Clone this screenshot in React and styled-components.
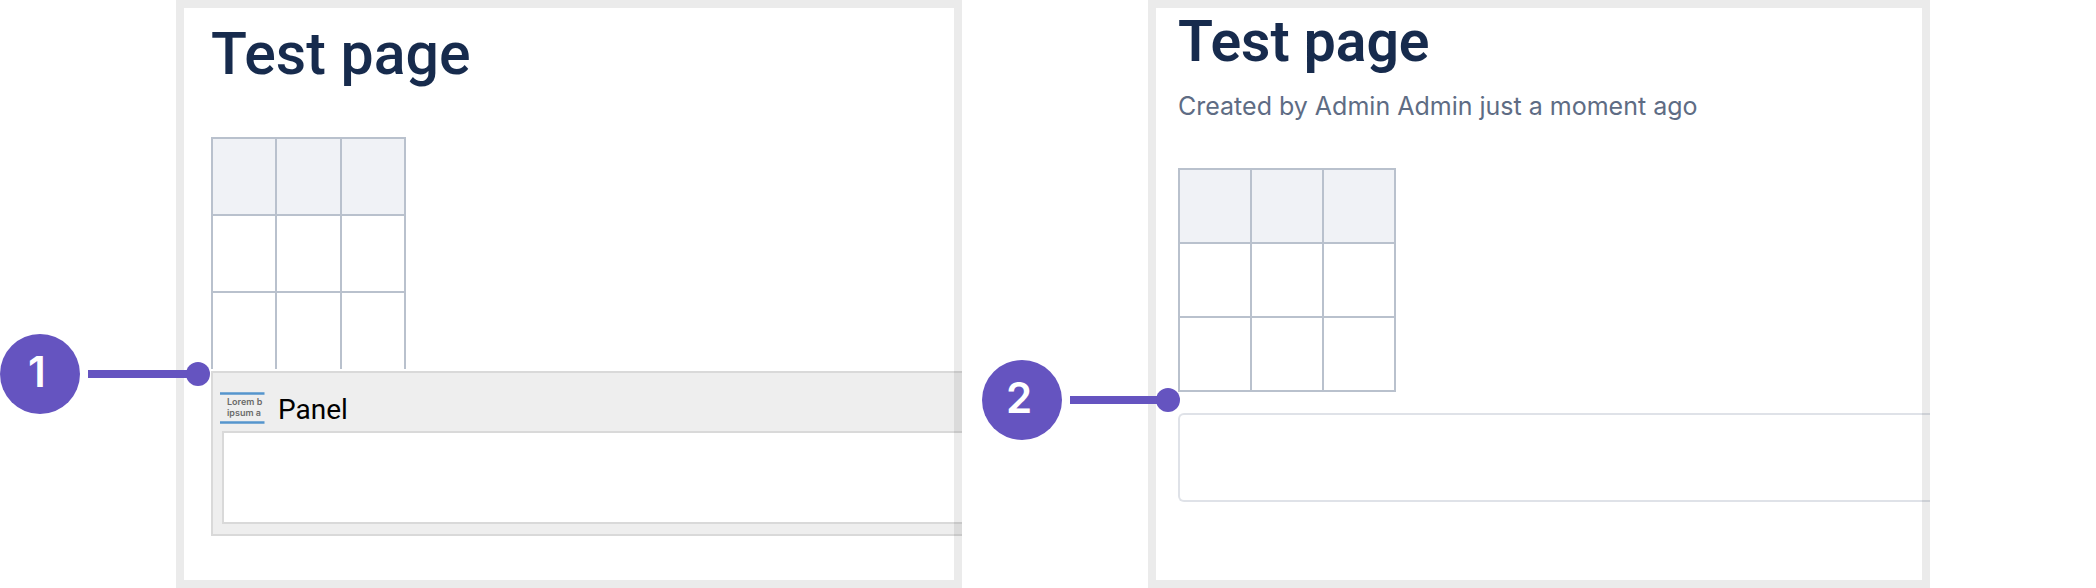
import React from 'react';
import styled, { createGlobalStyle } from 'styled-components';

const rows = [0, 1];
const columns = [0, 1, 2];

const Grid = ({ width, rowHeight, open }) => (
  <Table $width={width} $rowHeight={rowHeight} $open={open}>
    <thead>
      <tr>
        {columns.map(column => (
          <th key={column} scope="col" />
        ))}
      </tr>
    </thead>
    <tbody>
      {rows.map(row => (
        <tr key={row}>
          {columns.map(column => (
            <td key={column} />
          ))}
        </tr>
      ))}
    </tbody>
  </Table>
);

const Callout = ({ number, top, width, reach }) => (
  <CalloutWrapper $top={top} $width={width} $reach={reach}>
    <Badge>{number}</Badge>
    <Pointer />
  </CalloutWrapper>
);

const PanelIcon = () => (
  <svg width="46" height="32" viewBox="0 0 46 32" aria-hidden="true">
    <path d="M0 1.5h44.5M0 30.5h44.5" stroke="#5595cd" strokeWidth="2.4" />
    <g fill="#6a6a6a" fontFamily="Inter, sans-serif" fontSize="9" fontWeight="600">
      <text x="7" y="13">Lorem b</text>
      <text x="7" y="24">ipsum a</text>
    </g>
  </svg>
);

const App = () => (
  <>
    <GlobalStyle />
    <Page>
      <Figure>
        <Frame>
          <EditorContent>
            <Title>Test page</Title>
            <Grid width={195} rowHeight={77} open />
            <Macro>
              <MacroHeader>
                <PanelIcon />
                <MacroName>Panel</MacroName>
              </MacroHeader>
              <MacroBody />
            </Macro>
          </EditorContent>
        </Frame>
        <Callout number={1} top={334} width={210} reach={34} />
      </Figure>
      <Figure>
        <Frame>
          <ViewContent>
            <ViewTitle>Test page</ViewTitle>
            <Byline>Created by Admin Admin just a moment ago</Byline>
            <Grid width={218} rowHeight={74} />
            <Panel />
          </ViewContent>
        </Frame>
        <Callout number={2} top={360} width={198} reach={32} />
      </Figure>
    </Page>
  </>
);
export default App;

const GlobalStyle = createGlobalStyle`
  * {
    box-sizing: border-box;
  }
  body {
    margin: 0;
    background-color: #fff;
    font-family: Inter, 'Liberation Sans', sans-serif;
  }
`;

const Page = styled.main`
  display: grid;
  grid-template-columns: 786fr 782fr;
  column-gap: 186px;
  min-height: 100vh;
  padding: 0 166px 0 176px;
`;

const Figure = styled.section`
  position: relative;
  display: flex;
  min-width: 0;
`;

/* the border is translucent, so it is painted over the content it crops */
const Frame = styled.div`
  position: relative;
  flex: 1;
  min-width: 0;
  overflow: hidden;
  &::after {
    content: '';
    position: absolute;
    inset: 0;
    border: 8px solid #00000014;
    pointer-events: none;
  }
`;

const EditorContent = styled.div`
  padding: 16px 0 48px 35px;
`;

const ViewContent = styled.div`
  padding: 4px 0 48px 30px;
`;

const Title = styled.h1`
  margin: 0 0 45px;
  color: #172b4d;
  font-family: Roboto, 'Liberation Sans', sans-serif;
  font-size: 59px;
  font-weight: 500;
  line-height: 76px;
`;

const ViewTitle = styled(Title)`
  margin: 0;
  font-size: 57px;
  font-weight: 600;
`;

const Byline = styled.p`
  margin: 10px 0 46px;
  color: #5e6c84;
  font-size: 25px;
  line-height: 32px;
`;

const Table = styled.table`
  width: ${props => props.$width}px;
  border-collapse: collapse;
  table-layout: fixed;
  th,
  td {
    height: ${props => props.$rowHeight}px;
    padding: 0;
    border: 2px solid #b9c1cd;
  }
  th {
    background-color: #f0f2f6;
  }
  tr:last-child td {
    border-bottom-width: ${props => (props.$open ? '0' : '2px')};
  }
`;

const Macro = styled.div`
  display: flex;
  flex-direction: column;
  margin-top: 2px;
  padding: 0 0 10px 9px;
  border: 2px solid #d9d9d9;
  border-right: 0;
  background-color: #eee;
`;

const MacroHeader = styled.div`
  display: flex;
  align-items: flex-end;
  gap: 12px;
  height: 58px;
  margin-left: -2px;
  padding-bottom: 7px;
`;

const MacroName = styled.span`
  color: #000;
  font-family: Roboto, 'Liberation Sans', sans-serif;
  font-size: 28px;
  line-height: 28px;
`;

const MacroBody = styled.div`
  height: 93px;
  border: 2px solid #d9d9d9;
  border-right: 0;
  background-color: #fff;
`;

const Panel = styled.div`
  height: 89px;
  margin-top: 21px;
  border: 2px solid #dfe2e8;
  border-right: 0;
  border-radius: 6px 0 0 6px;
`;

const CalloutWrapper = styled.div`
  position: absolute;
  top: ${props => props.$top}px;
  right: calc(100% - ${props => props.$reach}px);
  display: flex;
  align-items: center;
  gap: 8px;
  width: ${props => props.$width}px;
`;

const Badge = styled.span`
  display: flex;
  flex: none;
  justify-content: center;
  align-items: center;
  width: 80px;
  height: 80px;
  padding: 0 6px 4px 0;
  border-radius: 50%;
  background-color: #6554c0;
  color: #fff;
  font-size: 42px;
  font-weight: 600;
  line-height: 48px;
`;

const Pointer = styled.span`
  display: flex;
  flex: 1;
  justify-content: flex-end;
  align-items: center;
  height: 8px;
  margin-right: 12px;
  background-color: #6554c0;
  &::after {
    content: '';
    flex: none;
    width: 24px;
    height: 24px;
    margin-right: -12px;
    border-radius: 50%;
    background-color: #6554c0;
  }
`;
